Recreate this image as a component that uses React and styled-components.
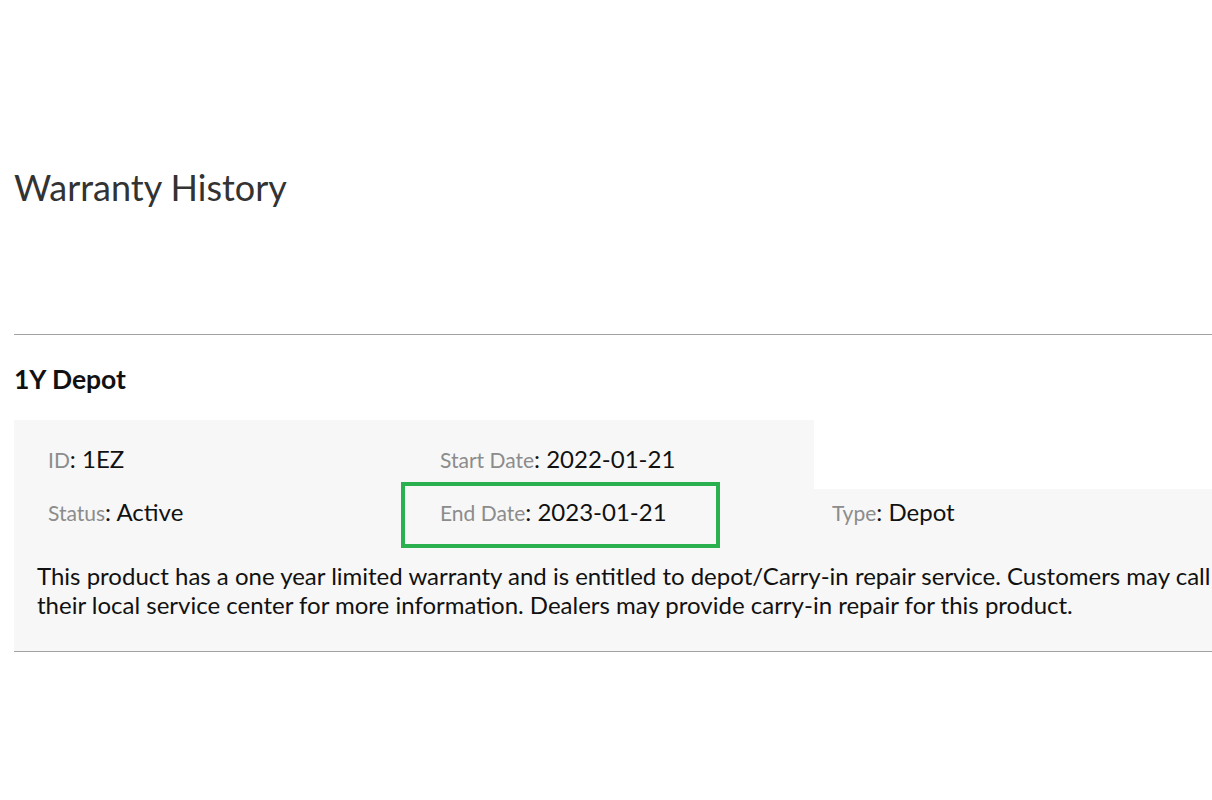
import React from "react";
import styled, { createGlobalStyle } from "styled-components";

const Global = createGlobalStyle`
  html, body { margin: 0; padding: 0; background: #ffffff; }
  body { font-family: Lato, "Noto Sans", sans-serif; color: #111; overflow: hidden; }
`;

const Page = styled.div`
  padding: 166px 0 0 14px;
  width: 1198px;
`;

const Title = styled.h1`
  margin: 0;
  font-size: 36px;
  line-height: 1.2;
  font-weight: 400;
  color: #333;
`;

const Divider = styled.div`
  margin-top: ${(p) => p.$top}px;
  border-top: 1px solid #a2a2a2;
  width: 100%;
`;

const SectionTitle = styled.h2`
  margin: 29px 0 0;
  font-size: 26.5px;
  line-height: 1.2;
  font-weight: 700;
  color: #111;
`;

const Panel = styled.div`
  margin-top: 24px;
`;

const TopRow = styled.div`
  width: 800px;
  background: #f7f7f7;
  display: grid;
  grid-template-columns: 392px 392px;
  padding: 24px 0 0 34px;
  box-sizing: border-box;
  height: 69px;
`;

const Body = styled.div`
  background: #f7f7f7;
  padding: 8px 0 32px 0;
`;

const FieldRow = styled.div`
  display: grid;
  grid-template-columns: 392px 392px 392px;
  padding-left: 34px;
`;

const Field = styled.div`
  position: relative;
  font-size: 24px;
  line-height: 29px;
  white-space: nowrap;
`;

const Label = styled.span`
  color: #8c8c8c;
  font-size: 21px;
`;

const Value = styled.span`
  color: #111;
`;

const Highlight = styled.div`
  position: absolute;
  left: -39px;
  top: -15px;
  width: 319px;
  height: 66px;
  border: 4px solid #2bb04f;
  box-sizing: border-box;
  pointer-events: none;
`;

const Description = styled.p`
  margin: 34px 0 0;
  padding-left: 23px;
  font-size: 24px;
  line-height: 29px;
  color: #111;
  white-space: nowrap;
`;

const F = ({ label, value, children }) => (
  <Field>
    <Label>{label}</Label>: <Value>{value}</Value>
    {children}
  </Field>
);

export default function App() {
  return (
    <>
      <Global />
      <Page>
        <Title>Warranty History</Title>
        <Divider $top={125} />
        <SectionTitle>1Y Depot</SectionTitle>
        <Panel>
          <TopRow>
            <F label="ID" value="1EZ" />
            <F label="Start Date" value="2022-01-21" />
          </TopRow>
          <Body>
            <FieldRow>
              <F label="Status" value="Active" />
              <F label="End Date" value="2023-01-21">
                <Highlight />
              </F>
              <F label="Type" value="Depot" />
            </FieldRow>
            <Description>
              This product has a one year limited warranty and is entitled to depot/Carry-in repair service. Customers may call
              <br />
              their local service center for more information. Dealers may provide carry-in repair for this product.
            </Description>
          </Body>
          <Divider $top={0} />
        </Panel>
      </Page>
    </>
  );
}
